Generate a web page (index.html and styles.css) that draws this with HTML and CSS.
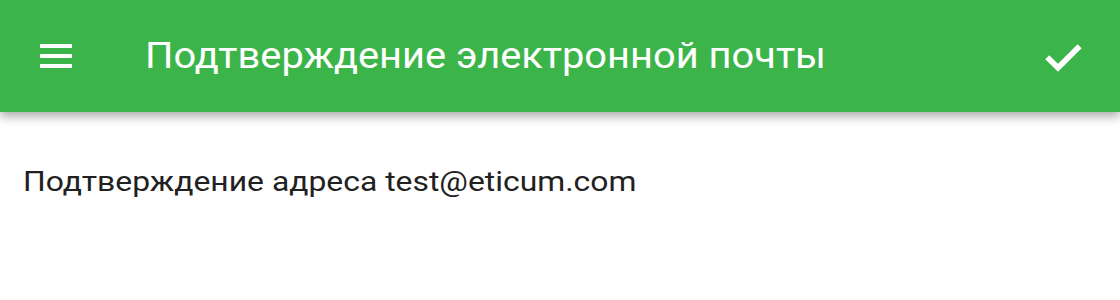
FILE: index.html
```html
<!DOCTYPE html>
<html lang="ru">
<head>
<meta charset="utf-8">
<title>Подтверждение электронной почты</title>
<link rel="stylesheet" href="styles.css">
</head>
<body>
<header class="appbar">
  <button class="icon-btn menu-btn" aria-label="Меню">
    <svg width="32" height="24" viewBox="0 0 32 24" aria-hidden="true">
      <rect x="0" y="0" width="32" height="4" fill="#fff"/>
      <rect x="0" y="10" width="32" height="4" fill="#fff"/>
      <rect x="0" y="20" width="32" height="4" fill="#fff"/>
    </svg>
  </button>
  <h1 class="title"><span class="stretch stretch-title">Подтверждение электронной почты</span></h1>
  <button class="icon-btn check-btn" aria-label="Готово">
    <svg width="48" height="48" viewBox="0 0 48 48" aria-hidden="true">
      <path d="M9.2 25.3L20 35.8 41.6 14.3" fill="none" stroke="#fff" stroke-width="5.6" stroke-linejoin="miter"/>
    </svg>
  </button>
</header>
<main class="content">
  <p class="message"><span class="stretch stretch-body">Подтверждение адреса test@eticum.com</span></p>
</main>
</body>
</html>
```

FILE: styles.css
```css
* { box-sizing: border-box; }
html, body {
  margin: 0;
  padding: 0;
  background: #ffffff;
  font-family: Roboto, "Liberation Sans", Arial, sans-serif;
}
.appbar {
  height: 112px;
  background: #3bb54a;
  display: flex;
  align-items: center;
  box-shadow: 0 4px 10px rgba(0, 0, 0, 0.35);
  position: relative;
  z-index: 1;
}
.icon-btn {
  background: none;
  border: 0;
  padding: 0;
  margin: 0;
  display: flex;
  align-items: center;
  justify-content: center;
  cursor: pointer;
}
.menu-btn {
  margin-left: 40px;
  width: 32px;
  height: 24px;
}
.title {
  margin: 0 0 0 73px;
  color: #ffffff;
  font-size: 36px;
  line-height: 36px;
  font-weight: 400;
  flex: 1;
  white-space: nowrap;
}
.stretch {
  display: inline-block;
  transform-origin: left center;
}
.stretch-title {
  transform: scaleX(1.106);
}
.stretch-body {
  transform: scaleX(1.18);
}
.check-btn {
  width: 48px;
  height: 48px;
  margin-right: 34px;
}
.check-btn svg { display: block; }
.content {
  padding: 54px 25px 0 23px;
}
.message {
  margin: 0;
  font-size: 27px;
  line-height: 32px;
  color: #212121;
  white-space: nowrap;
}
```
